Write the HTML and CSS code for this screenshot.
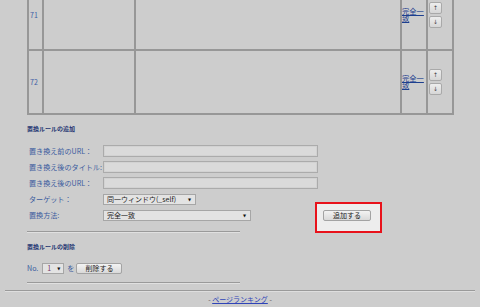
FILE: index.html
```html
<!DOCTYPE html>
<html lang="ja">
<head>
<meta charset="utf-8">
<title>置換ルール</title>
<link rel="stylesheet" href="styles.css">
</head>
<body>
<div class="page">
  <div class="content">
    <table class="rules">
      <colgroup>
        <col class="c-num"><col class="c-url"><col class="c-title"><col class="c-method"><col class="c-order">
      </colgroup>
      <tr class="row-first">
        <td class="num">71</td>
        <td></td>
        <td></td>
        <td class="method"><a href="#">完全一致</a></td>
        <td class="order"><button class="arrow">↑</button><button class="arrow">↓</button></td>
      </tr>
      <tr class="row">
        <td class="num">72</td>
        <td></td>
        <td></td>
        <td class="method"><a href="#">完全一致</a></td>
        <td class="order"><button class="arrow">↑</button><button class="arrow">↓</button></td>
      </tr>
    </table>

    <h3 class="section-title add-title">置換ルールの追加</h3>
    <div class="add-form">
      <label class="lbl">置き換え前のURL：</label>
      <input class="text" type="text">
      <span></span>
      <label class="lbl">置き換え後のタイトル:</label>
      <input class="text" type="text">
      <span></span>
      <label class="lbl">置き換え後のURL：</label>
      <input class="text" type="text">
      <span></span>
      <label class="lbl">ターゲット：</label>
      <div class="field"><span class="select target">同一ウィンドウ(_self)<span class="caret">▼</span></span></div>
      <span></span>
      <label class="lbl">置換方法:</label>
      <div class="field"><span class="select method-select">完全一致<span class="caret">▼</span></span></div>
      <div class="submit-cell"><button class="btn add-btn">追加する</button></div>
    </div>
    <div class="rule"></div>

    <h3 class="section-title del-title">置換ルールの削除</h3>
    <div class="del-form">
      <span class="lbl">No.</span>
      <span class="select num-select"><span class="num-val">1</span><span class="caret">▼</span></span>
      <span class="lbl wo">を</span>
      <button class="btn del-btn">削除する</button>
    </div>
    <div class="rule rule2"></div>
  </div>
  <div class="footer-line"></div>
  <div class="footer">- <a href="#">ページランキング</a> -</div>
</div>
</body>
</html>
```

FILE: styles.css
```css
* { box-sizing: border-box; }
html {
  overflow: hidden;
  background: #cdcdcd;
}
body {
  margin: 0;
  padding: 0;
  background: #cdcdcd;
  font-family: "Noto Sans CJK JP", "DejaVu Sans", sans-serif;
}
.page {
  width: 480px;
  padding: 0 5px;
}
.content {
  padding-left: 22px;
}

/* table */
.rules {
  border-collapse: collapse;
  table-layout: fixed;
  width: 425px;
  margin-top: -22px;
}
.c-num { width: 15px; }
.c-url { width: 92px; }
.c-title { width: 266px; }
.c-method { width: 26px; }
.c-order { width: 26px; }
.rules td {
  border: 2px solid #979797;
  padding: 0;
  vertical-align: middle;
}
.row-first td { height: 71px; }
.row td { height: 64px; }
.rules td.num {
  font-size: 7px;
  color: #3d5fa6;
  padding-left: 1px;
  line-height: 8px;
}
.rules td.method {
  font-size: 7.3px;
  line-height: 7px;
  padding-left: 0;
}
.method a {
  color: #1d3f8f;
  text-decoration: underline;
  word-break: break-all;
}
.rules td.order {
  padding-left: 1px;
}
.arrow {
  display: block;
  width: 13px;
  height: 12px;
  margin: 0 0 2px 0;
  padding: 0;
  font-size: 6px;
  line-height: 10px;
  color: #444;
  background: linear-gradient(#eeeeee, #d6d6d6);
  border: 1px solid #a9a9a9;
  border-radius: 2px;
  font-family: "DejaVu Sans", sans-serif;
}
.arrow:last-child { margin-bottom: 0; }

/* headings */
.section-title {
  margin: 0;
  font-size: 6px;
  line-height: 8px;
  font-weight: bold;
  color: #1f3673;
}
.add-title { margin-top: 10px; margin-bottom: 12px; }
.del-title { margin-top: 10px; margin-bottom: 11px; }

/* add form */
.add-form {
  display: grid;
  grid-template-columns: 76px 215px auto;
  grid-auto-rows: 12px;
  row-gap: 4px;
  align-items: center;
}
.lbl {
  font-size: 7.1px;
  line-height: 12px;
  color: #3b5b9e;
  padding-left: 2px;
  white-space: nowrap;
}
.text {
  width: 215px;
  height: 12px;
  margin: 0;
  border: 1px solid #ababab;
  background: #dadada;
  box-shadow: inset 0 0 0 1px #d2d2d2;
}
.field { display: flex; align-items: center; }
.select {
  display: inline-flex;
  align-items: center;
  justify-content: space-between;
  height: 11px;
  padding: 0 4px 0 3px;
  border: 1px solid #a6a6a6;
  background: #e3e3e3;
  font-size: 7px;
  line-height: 9px;
  color: #222;
  white-space: nowrap;
}
.caret {
  font-size: 4px;
  color: #111;
  font-family: "DejaVu Sans", sans-serif;
}
.target { width: 93px; }
.method-select { width: 148px; }
.submit-cell {
  position: relative;
  padding-left: 5px;
  display: flex;
  align-items: center;
}
.submit-cell::before {
  content: "";
  position: absolute;
  left: -3px;
  top: -8px;
  width: 63px;
  height: 27px;
  border: 2px solid #e8121b;
  background: #ededed;
}
.btn {
  position: relative;
  margin: 0;
  padding: 0;
  height: 11px;
  font-family: "Noto Sans CJK JP", sans-serif;
  font-size: 7px;
  line-height: 9px;
  color: #222;
  background: linear-gradient(#f3f3f3, #d9d9d9);
  border: 1px solid #a3a3a3;
  border-radius: 2px;
}
.add-btn { width: 48px; }
.del-btn { width: 46px; }

.rule {
  width: 213px;
  height: 2px;
  margin-top: 10px;
  border-top: 1px solid #9a9a9a;
  border-bottom: 1px solid #e0e0e0;
}

/* delete form */
.del-form {
  display: flex;
  align-items: center;
  height: 12px;
}
.del-form .lbl { padding-left: 0; }
.num-select {
  width: 22px;
  margin-left: 4px;
  padding: 0 3px 0 4px;
}
.num-val { color: #7a3a66; }
.wo { margin-left: 3px; margin-right: 2px; }
.rule2 { margin-top: 8px; }

/* footer */
.footer-line {
  margin-top: 6px;
  height: 2px;
  border-top: 1px solid #9a9a9a;
  border-bottom: 1px solid #dedede;
}
.footer {
  text-align: center;
  font-size: 7px;
  line-height: 10px;
  color: #555;
  margin-top: 2px;
}
.footer a {
  color: #2f44b8;
  text-decoration: underline;
}
```
